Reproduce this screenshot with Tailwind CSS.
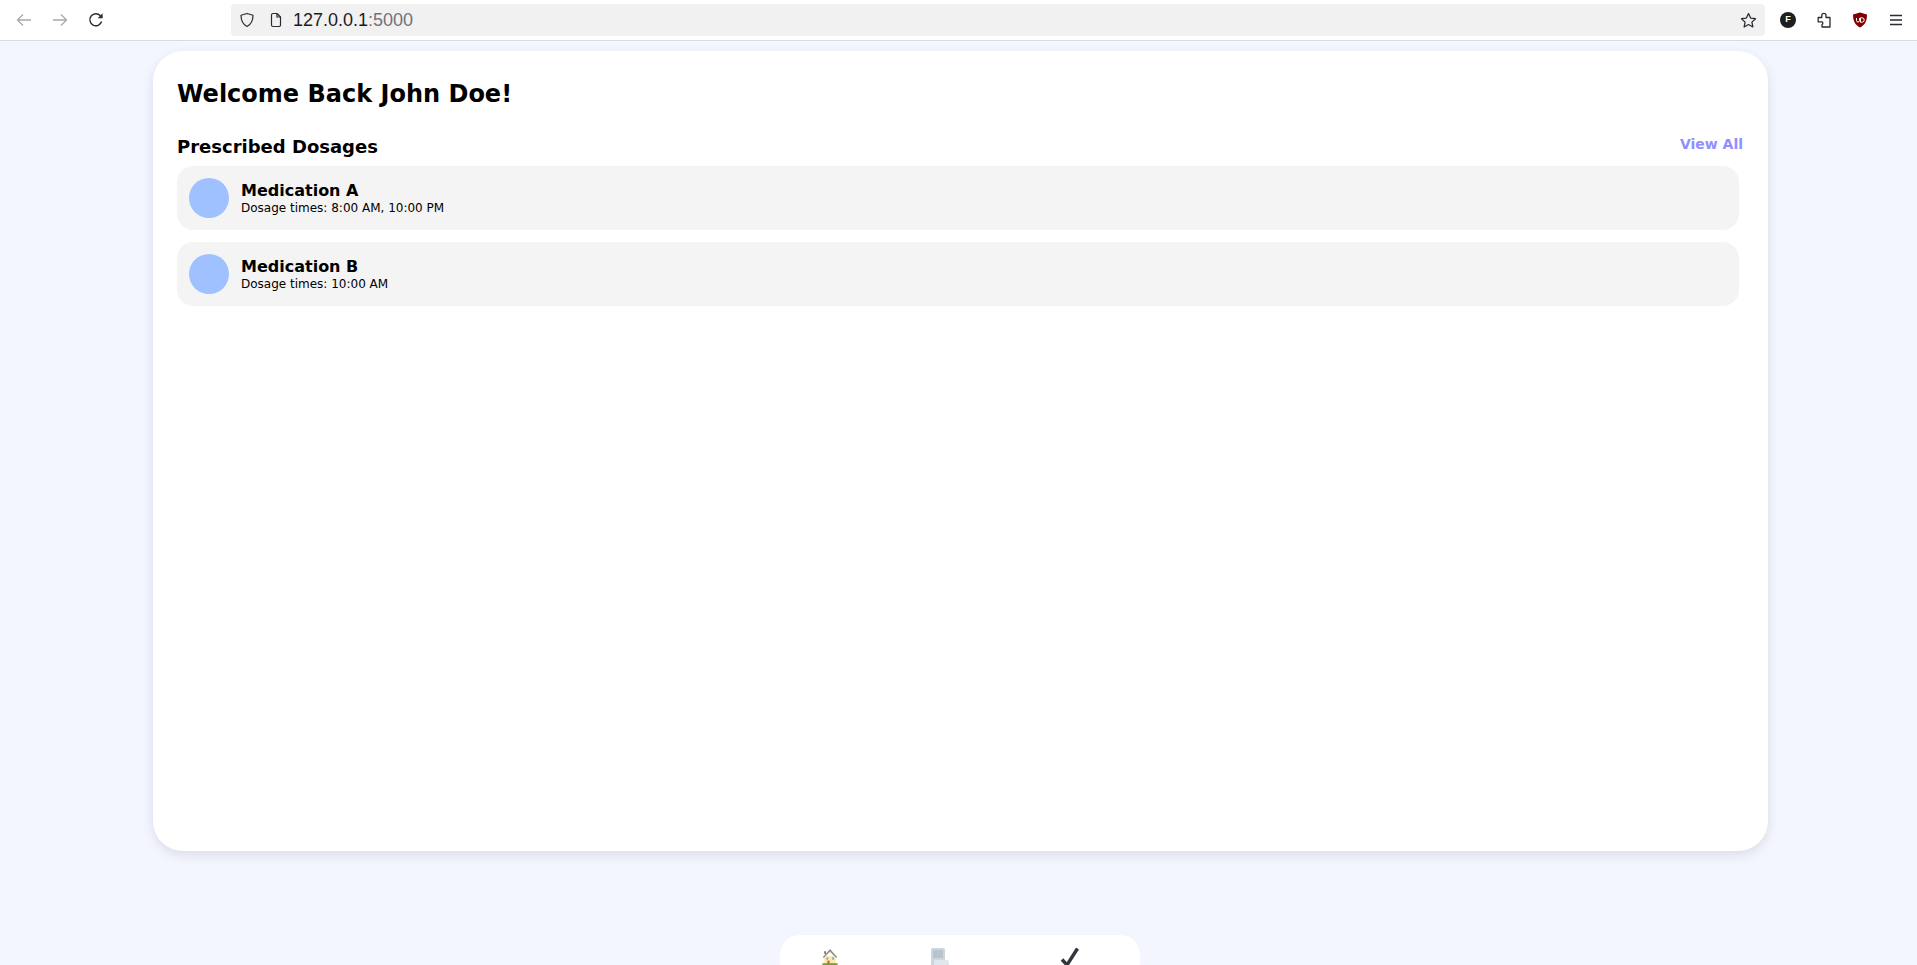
<!DOCTYPE html>
<html lang="en">
  <head>
    <meta charset="UTF-8" />
    <meta name="viewport" content="width=device-width, initial-scale=1.0" />
    <title>Dashboard</title>
    <script src="https://cdn.jsdelivr.net/npm/@tailwindcss/browser@4"></script>
  </head>
  <body class="h-screen overflow-hidden bg-[#f3f6fe] font-['DejaVu_Sans',sans-serif] text-black">
    <!-- browser toolbar -->
    <div class="h-[41px] flex items-center bg-white border-b border-[#dcdce0] pl-[16px] pr-[11px]">
      <svg class="w-[16px] h-[16px] text-[#a9a9ad]" viewBox="0 0 16 16" fill="none" stroke="currentColor" stroke-width="1.3"><path d="M15 8H1.5M7 2.5 1.5 8 7 13.500" /></svg>
      <svg class="w-[16px] h-[16px] ml-[20px] text-[#a9a9ad]" viewBox="0 0 16 16" fill="none" stroke="currentColor" stroke-width="1.3"><path d="M1 8h13.500M9 2.500 14.500 8 9 13.500" /></svg>
      <svg class="w-[16px] h-[16px] ml-[20px] text-[#2b2a33]" viewBox="0 0 16 16" fill="none" stroke="currentColor" stroke-width="1.4"><path d="M13.600 9.500A6 6 0 1 1 12.400 3.800L14 5.600" /><path d="M14.600 1.200v5h-5" fill="currentColor" stroke="none" /></svg>
      <div class="ml-[127px] w-[1534px] h-[32px] flex items-center bg-[#f1f1f2] rounded-[4px] pl-[8px] pr-[8px]">
        <svg class="w-[16px] h-[16px] text-[#2b2a33]" viewBox="0 0 16 16" fill="none" stroke="currentColor" stroke-width="1.2"><path d="M8 1.500 14 3.300c0 5.500-1.600 9-6 11.200C3.600 12.300 2 8.800 2 3.300Z" stroke-linejoin="round" /></svg>
        <svg class="w-[16px] h-[16px] ml-[13px] text-[#2b2a33]" viewBox="0 0 16 16" fill="none" stroke="currentColor" stroke-width="1.2"><path d="M3.500 3a1.500 1.500 0 0 1 1.500-1.500h4L12.500 5v8a1.500 1.500 0 0 1-1.500 1.500H5A1.500 1.500 0 0 1 3.500 13Z" stroke-linejoin="round" /><path d="M9 1.500V5h3.500" /></svg>
        <span class="ml-[9px] font-['Liberation_Sans',sans-serif] text-[18px] text-[#1c1b22]">127.0.0.1<span class="text-[#73727a]">:5000</span></span>
        <svg class="ml-auto w-[17px] h-[17px] text-[#2b2a33]" viewBox="0 0 16 16" fill="none" stroke="currentColor" stroke-width="1.2"><path d="m8 1.500 2 4.200 4.600.6-3.400 3.200.9 4.600L8 11.800l-4.100 2.300.9-4.600L1.400 6.300 6 5.700Z" stroke-linejoin="round" /></svg>
      </div>
      <div class="ml-[15px] w-[16px] h-[16px] rounded-full bg-[#1f1f1f] flex items-center justify-center font-['Liberation_Sans',sans-serif] text-[9px] font-bold text-white">F</div>
      <svg class="ml-[20px] w-[16px] h-[16px] text-[#2b2a33]" viewBox="0 0 16 16" fill="none" stroke="currentColor" stroke-width="1.3"><path d="M2.200 5.500H5.800V3.400a2.100 2.100 0 0 1 4.200 0V5.500H14V15H6V12.500a1.500 1.500 0 0 0 0-2.700H2.200Z" stroke-linejoin="round" /></svg>
      <svg class="ml-[20px] w-[16px] h-[16px]" viewBox="0 0 16 16"><path d="M8 .5 15 2.500c0 6.500-2 10.500-7 13C3 13 1 9 1 2.500Z" fill="#800000" /><path d="M4.500 6v2.500a1.500 1.500 0 0 0 3 0V6M8.500 5.800v4.400H10a2.200 2.200 0 0 0 0-4.400Z" fill="none" stroke="#fff" stroke-width="1" /></svg>
      <svg class="ml-[20px] w-[16px] h-[16px] text-[#2b2a33]" viewBox="0 0 16 16" fill="none" stroke="currentColor" stroke-width="1.3"><path d="M2 3.500h12M2 8h12M2 12.500h12" /></svg>
    </div>

    <div class="flex flex-col items-center">
      <!-- main card -->
      <main class="mt-[10px] ml-[4px] w-[1615px] h-[800px] bg-white rounded-[30px] shadow-[0_4px_12px_rgba(0,0,0,0.1)] pt-[25px] pl-[24px] pr-[25px]">
        <h1 class="text-[24px] leading-[36px] font-bold">Welcome Back John Doe!</h1>
        <div class="mt-[19px] h-[35px] flex justify-between">
          <h2 class="text-[18px] leading-[27px] mt-[2px] font-bold">Prescribed Dosages</h2>
          <a href="#" class="text-[14px] leading-[21px] mt-[3px] font-bold text-[#8f8fff]">View All</a>
        </div>
        <div class="mr-[4px] flex flex-col gap-[12px]">
          <div class="h-[64px] flex items-center gap-[12px] bg-[#f4f4f4] rounded-[16px] px-[12px]">
            <div class="w-[40px] h-[40px] rounded-full bg-[#a0c1ff]"></div>
            <div class="pt-[2px]">
              <p class="text-[16px] leading-[18px] font-bold">Medication A</p>
              <p class="text-[12px] leading-[16px]">Dosage times: 8:00 AM, 10:00 PM</p>
            </div>
          </div>
          <div class="h-[64px] flex items-center gap-[12px] bg-[#f4f4f4] rounded-[16px] px-[12px]">
            <div class="w-[40px] h-[40px] rounded-full bg-[#a0c1ff]"></div>
            <div class="pt-[2px]">
              <p class="text-[16px] leading-[18px] font-bold">Medication B</p>
              <p class="text-[12px] leading-[16px]">Dosage times: 10:00 AM</p>
            </div>
          </div>
        </div>
      </main>

      <!-- bottom nav, cut off by the window -->
      <nav class="mt-[84px] ml-[3px] w-[360px] h-[80px] shrink-0 bg-white rounded-[20px] relative">
        <svg class="absolute left-[42px] top-[14px] w-[16px] h-[16px]" viewBox="0 0 18 18">
          <path d="M2.500 8h13v9h-13Z" fill="#ffe8a8" />
          <path d="M1 9 5.500 4 9 0l8 9-1 1-7-7-3.500 3.500L2 10Z" fill="#8a8f94" />
          <rect x="2.500" y="2.500" width="2" height="3" fill="#c94f5a" />
          <rect x="5" y="9.500" width="2" height="2.500" fill="#5daee8" />
          <rect x="11.500" y="9.500" width="2" height="2.500" fill="#5daee8" />
          <rect x="6" y="13" width="2.500" height="4" fill="#c1694f" />
          <rect x="0.500" y="16" width="17" height="2" fill="#6f9e3a" />
        </svg>
        <svg class="absolute left-[150px] top-[13px] w-[20px] h-[20px]" viewBox="0 0 20 20">
          <rect x="1" y="0" width="14" height="18" rx="1.500" fill="#ccd6dd" />
          <path d="M3 3h10M3 5h10M3 7h10M3 9h10" stroke="#99aab5" stroke-width="0.800" />
          <rect x="4" y="12" width="15" height="8" rx="2" fill="#e1e8ed" />
        </svg>
        <svg class="absolute left-[280px] top-[12px] w-[20px] h-[20px]" viewBox="0 0 20 20" fill="none" stroke="#31373d" stroke-width="3.400"><path d="M2 12.500 7 18 17.500 1.500" /></svg>
      </nav>
    </div>
  </body>
</html>
